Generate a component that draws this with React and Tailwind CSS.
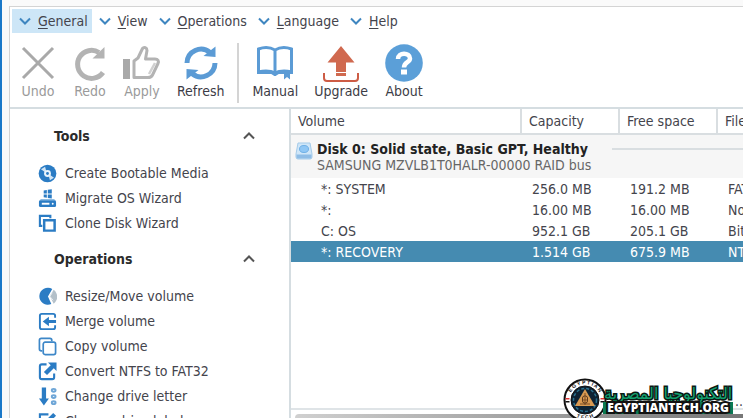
import React, { useState } from "react";

const menuItems = ["General", "View", "Operations", "Language", "Help"];

const tools = ["Create Bootable Media", "Migrate OS Wizard", "Clone Disk Wizard"];

const operations = [
  "Resize/Move volume",
  "Merge volume",
  "Copy volume",
  "Convert NTFS to FAT32",
  "Change drive letter",
  "Change drive label",
];

const volumes = [
  { name: "*: SYSTEM", capacity: "256.0 MB", free: "191.2 MB", fs: "FAT32" },
  { name: "*:", capacity: "16.00 MB", free: "16.00 MB", fs: "Not formatted" },
  { name: "C: OS", capacity: "952.1 GB", free: "205.1 GB", fs: "BitLocker" },
  { name: "*: RECOVERY", capacity: "1.514 GB", free: "675.9 MB", fs: "NTFS" },
];

// Large toolbar icons
const toolbarIcons = {
  Undo: (
    <path d="M5 5L35 35M35 5L5 35" stroke="#a9a9a9" strokeWidth="3" fill="none" />
  ),
  Redo: (
    <>
      <path d="M33 29.500A14 14 0 1 1 29 9.500" stroke="#b3b3b3" strokeWidth="5" fill="none" />
      <path d="M34.500 4V15.500H22.500Z" fill="#b3b3b3" />
    </>
  ),
  Apply: (
    <>
      <path d="M1 16H8V36H1Z" fill="#a9a9a9" />
      <path
        d="M12 18L16 15L20.500 5.500C22 3.500 25 4.500 25 7.500L23.500 16H33C36 16 37 18 36 20.500L30.500 32C29.500 34 28 34.500 26 34.500H12Z"
        stroke="#b3b3b3"
        strokeWidth="3"
        strokeLinejoin="round"
        fill="none"
      />
      <path d="M33 20L27 31" stroke="#d0d0d0" strokeWidth="2.500" />
    </>
  ),
  Refresh: (
    <>
      <path d="M6 20A14 14 0 0 1 29 9.500M34 20A14 14 0 0 1 11 30.500" stroke="#5b9bd5" strokeWidth="5" fill="none" />
      <path d="M34.500 3.500V14L22.500 13Z" fill="#5b9bd5" />
      <path d="M5.500 36.500V26L17.500 27Z" fill="#5b9bd5" />
    </>
  ),
  Manual: (
    <>
      <path
        d="M3.500 6C9 4 15 4 20 7C25 4 31 4 36.500 6V29C31 27.500 25 27.500 20 30C15 27.500 9 27.500 3.500 29ZM20 6V29"
        stroke="#5b9bd5"
        strokeWidth="3"
        fill="none"
      />
      <path d="M2 27.500H17L20 29L23 27.500H38V31H25C22 31 22 33 20 33C18 33 18 31 15 31H2Z" fill="#5b9bd5" />
      <path d="M29 28H35V36.500L32 34L29 36.500Z" fill="#5b9bd5" />
    </>
  ),
  Upgrade: (
    <>
      <path d="M20 3L33.500 19.500H25V29H15V19.500H6.500Z" fill="#d0694f" />
      <path d="M15 31.500H25" stroke="#d0694f" strokeWidth="3" />
      <path d="M3 30V35Q3 38 6 38H34Q37 38 37 35V30" stroke="#cd5c45" strokeWidth="2" fill="none" />
    </>
  ),
  About: (
    <>
      <circle cx="20" cy="20" r="18.800" fill="#5b9fd8" />
      <path
        d="M14 16C14 9 26 9 26 15.500C26 19.500 20 19 20 24.500"
        stroke="#fff"
        strokeWidth="4.500"
        fill="none"
      />
      <path d="M17 26.500H23V31.500H17Z" fill="#fff" />
    </>
  ),
};

// Small sidebar icons
const smallIcons = {
  "Create Bootable Media": (
    <>
      <circle cx="10" cy="10" r="9.300" fill="#2b7cc4" />
      <path d="M8 8L4.500 5.500L7 4ZM12 12L15.500 14.500L13 16Z" fill="#cfe4f5" stroke="#cfe4f5" strokeWidth="1.500" />
      <circle cx="10" cy="10" r="3.600" fill="#e9f4fc" />
      <circle cx="10" cy="10" r="1.500" fill="#2b7cc4" />
    </>
  ),
  "Migrate OS Wizard": (
    <>
      <path d="M6 1.500L9.300 1V4.700H6ZM10.300 .8L14.500 .2V4.700H10.300ZM6 5.700H9.300V9.300L6 8.800ZM10.300 5.700H14.500V10L10.300 9.500Z" fill="#2b7cc4" />
      <path d="M3 10.500H17L19 13H1Z" fill="#8dbbe2" />
      <rect x="1" y="12" width="18" height="7" rx="1.500" fill="#2b7cc4" />
      <path d="M4 15.500H12" stroke="#fff" strokeWidth="2" />
      <circle cx="15.500" cy="15.500" r="1" fill="#fff" />
    </>
  ),
  "Clone Disk Wizard": (
    <g stroke="#2b7cc4" fill="none">
      <path d="M4.500 12.500H2V2H13V4.500" strokeWidth="2.200" />
      <path d="M6.500 6.500H17.500V17.500H6.500Z" strokeWidth="2.600" />
    </g>
  ),
  "Resize/Move volume": (
    <>
      <path d="M10.500 10L15 2A9 9 0 1 0 14 18Z" fill="#2b7cc4" />
      <path d="M12.500 9.500L16.500 3A9 9 0 0 1 16.500 17.500Z" fill="#b4c0c9" />
      <path d="M15 6L12.500 10L16 14" stroke="#e9eef1" strokeWidth="1" fill="none" />
    </>
  ),
  "Merge volume": (
    <>
      <path d="M18 6V4Q18 2 16 2H4Q2 2 2 4V16Q2 18 4 18H16Q18 18 18 16V14" stroke="#2b7cc4" strokeWidth="2" fill="none" />
      <path d="M19 8.500V11.500H11.500V15L5 10L11.500 5V8.500Z" fill="#2b7cc4" />
    </>
  ),
  "Copy volume": (
    <g stroke="#3d87c8" strokeWidth="1.800" fill="none">
      <path d="M4.500 14.500H3.500Q1.500 14.500 1.500 12.500V3.500Q1.500 1.500 3.500 1.500H12.500Q14.500 1.500 14.500 3.500V4.500" />
      <rect x="5.500" y="5.500" width="13" height="13" rx="2" />
    </g>
  ),
  "Convert NTFS to FAT32": (
    <>
      <path d="M9 2.500H4Q2 2.500 2 4.500V16Q2 18 4 18H15Q17 18 17 16V12" stroke="#2b7cc4" strokeWidth="2.200" fill="none" />
      <path d="M19.500 .5V9.500L16.600 6.600L9.500 13.800L6.200 10.500L13.400 3.400L10.500 .5Z" fill="#2b7cc4" />
    </>
  ),
  "Change drive letter": (
    <>
      <path d="M4 .5H8.500V12H11.500L6.200 19.500L1 12H4Z" fill="#2b7cc4" />
      <g stroke="#6ea6d7" strokeWidth="2" fill="none">
        <ellipse cx="16.500" cy="3.500" rx="2" ry="1.500" />
        <ellipse cx="16.500" cy="10" rx="2" ry="1.500" />
        <ellipse cx="16.500" cy="16.500" rx="2" ry="1.500" />
      </g>
    </>
  ),
  "Change drive label": (
    <>
      <path d="M11 2.500H2V18H17V11" stroke="#2b7cc4" strokeWidth="2.200" fill="none" />
      <path d="M16 1L19 4L11 12L7 13L8 9Z" fill="#2b7cc4" />
    </>
  ),
};

const Chevron = ({ className }) => (
  <svg viewBox="0 0 12 8" className={className} fill="none" stroke="currentColor" strokeWidth="2">
    <path d="M1 1.500L6 6.500L11 1.500" />
  </svg>
);

const ToolButton = ({ label, disabled }) => (
  <button type="button" disabled={disabled} className="flex flex-col items-center">
    <svg viewBox="0 0 40 40" className="size-10">
      {toolbarIcons[label]}
    </svg>
    <span className={`h-5 leading-4 ${disabled ? "text-[#9a9a9a]" : "text-[#3c3c46]"}`}>{label}</span>
  </button>
);

const SideSection = ({ title, items }) => {
  const [open, setOpen] = useState(true);

  return (
    <section>
      <h2>
        <button
          type="button"
          aria-expanded={open}
          onClick={() => setOpen(!open)}
          className="flex h-6 w-full items-center justify-between pl-4 font-bold text-[#2b2b2b]"
        >
          {title}
          <Chevron className={open ? "w-3 rotate-180 text-[#555]" : "w-3 text-[#555]"} />
        </button>
      </h2>
      {open && (
        <ul className="pt-[13px]">
          {items.map((item) => (
            <li key={item}>
              <button type="button" className="flex h-[25px] w-full items-center gap-2 whitespace-nowrap">
                <svg viewBox="0 0 20 20" className="size-[19px] shrink-0">
                  {smallIcons[item]}
                </svg>
                {item}
              </button>
            </li>
          ))}
        </ul>
      )}
    </section>
  );
};

const VolumeTable = ({ selected, onSelect }) => (
  <table className="w-[540px] table-fixed border-collapse text-left whitespace-nowrap">
    <colgroup>
      <col className="w-[230px]" />
      <col className="w-[98px]" />
      <col className="w-[98px]" />
      <col />
    </colgroup>
    <thead>
      <tr className="h-[25px] border-b-2 border-[#d9dee1]">
        <th className="pl-[7px] font-normal">Volume</th>
        <th className="border-l-2 border-[#d9dee1] pl-[7px] font-normal">Capacity</th>
        <th className="border-l-2 border-[#d9dee1] pl-[7px] font-normal">Free space</th>
        <th className="border-l-2 border-[#d9dee1] pl-[7px] font-normal">File system</th>
      </tr>
    </thead>
    <tbody>
      <tr className="bg-[#f6f6f6]">
        <td colSpan={4} className="h-[44px] p-0">
          <div className="flex gap-1 pl-1">
            <svg viewBox="0 0 18 18" className="mt-px size-[18px] shrink-0">
              <path d="M3 1H15L17 12V15Q17 17 15 17H3Q1 17 1 15V12Z" fill="#cfe6f8" stroke="#a5cbe9" />
              <ellipse cx="9" cy="7" rx="4.500" ry="3.500" fill="#8fc7f5" stroke="#6fb0e6" />
              <path d="M1.500 12.500H16.500V15Q16.500 16.500 15 16.500H3Q1.500 16.500 1.500 15Z" fill="#8fbde6" />
            </svg>
            <div className="flex-1">
              <div className="flex items-center gap-6 leading-4">
                <span className="font-bold text-[#222]">Disk 0: Solid state, Basic GPT, Healthy</span>
                <span className="h-[2px] flex-1 bg-[#d9dee1]" />
              </div>
              <div className="leading-4 text-[#666]">SAMSUNG MZVLB1T0HALR-00000 RAID bus</div>
            </div>
          </div>
        </td>
      </tr>
      {volumes.map((volume) => (
        <tr
          key={volume.name}
          onClick={() => onSelect(volume.name)}
          className={`h-[21px] ${selected === volume.name ? "bg-[#458bb1] text-white" : ""}`}
        >
          <td className="p-0 pl-[30px] leading-5">{volume.name}</td>
          <td className="p-0 pl-[11px] leading-5">{volume.capacity}</td>
          <td className="p-0 pl-[11px] leading-5">{volume.free}</td>
          <td className="p-0 pl-[11px] leading-5">{volume.fs}</td>
        </tr>
      ))}
    </tbody>
  </table>
);

const Watermark = () => (
  <div className="absolute right-[10px] -bottom-1 flex items-center">
    <svg viewBox="0 0 44 44" className="size-11">
      <circle cx="22" cy="22" r="20.500" fill="#fff" stroke="#111" strokeWidth="2" />
      <circle cx="22" cy="22" r="14" fill="#0d2233" stroke="#111" />
      <circle cx="22" cy="22" r="11.500" fill="none" stroke="#2b7390" strokeWidth="1.500" strokeDasharray="3 2" />
      <path d="M22 11L32 28H12Z" fill="#d99a52" />
      <path d="M22 15V27M19 22H25M17 26H27" stroke="#7b4d24" strokeWidth="1" />
      <rect x="19.500" y="18" width="5" height="7" rx="2" fill="none" stroke="#5f3b1d" />
      <path d="M2.500 20H6.500V21.500H2.500ZM37.500 20H41.500V21.500H37.500Z" fill="#d33" />
      <path d="M2.500 23H6.500V24.500H2.500ZM37.500 23H41.500V24.500H37.500Z" fill="#111" />
      <defs>
        <path id="ringTop" d="M6 22A16 16 0 0 1 38 22" />
        <path id="ringBottom" d="M3 22A19 19 0 0 0 41 22" />
      </defs>
      <g fill="#111" fontSize="5" fontWeight="bold" textAnchor="middle" fontFamily="Liberation Sans, sans-serif">
        <text>
          <textPath href="#ringTop" startOffset="50%">E G Y P T I A N</textPath>
        </text>
        <text>
          <textPath href="#ringBottom" startOffset="50%">T E C H</textPath>
        </text>
      </g>
    </svg>
    <div className="-ml-1 flex flex-col items-center whitespace-nowrap [paint-order:stroke_fill]">
      <span
        dir="rtl"
        className="font-['DejaVu_Sans',sans-serif] text-[16px] leading-4 text-[#12a06e] [-webkit-text-stroke:3px_#0a1a14]"
      >
        التكنولوجيا المصرية
      </span>
      <span className="bg-[#0a7a54] px-1 font-['Open_Sans',sans-serif] text-[12px] leading-3 font-extrabold text-white [-webkit-text-stroke:4px_#111]">
        EGYPTIANTECH.ORG
      </span>
    </div>
  </div>
);

export default function App() {
  const [activeMenu, setActiveMenu] = useState("General");
  const [selected, setSelected] = useState("*: RECOVERY");

  return (
    <div className="relative flex h-screen flex-col overflow-hidden border-l-2 border-[#1a78c8] bg-[#fafafa] pt-[6px] pl-[7px] font-['DejaVu_Sans_Condensed','DejaVu_Sans',sans-serif] text-[14px] text-[#44444c]">
      <div className="flex min-h-0 flex-1 flex-col border-t border-l border-[#d4d4d4] bg-white">
        <nav className="flex shrink-0 pt-[2px] pl-[2px]">
          {menuItems.map((item) => (
            <button
              key={item}
              type="button"
              onClick={() => setActiveMenu(item)}
              className={`flex h-6 items-center gap-[7px] pr-1 pl-[7px] ${activeMenu === item ? "bg-[#cde6f7]" : ""}`}
            >
              <Chevron className="w-3 text-[#3f86c0]" />
              <span>
                <span className="underline underline-offset-2">{item[0]}</span>
                {item.slice(1)}
              </span>
            </button>
          ))}
        </nav>

        <div className="flex shrink-0 gap-[13px] border-b-2 border-[#d5dde1] pt-[10px] pb-1 pl-2">
          <div className="flex gap-3">
            <ToolButton label="Undo" disabled />
            <ToolButton label="Redo" disabled />
            <ToolButton label="Apply" disabled />
            <div className="pl-[3px]">
              <ToolButton label="Refresh" />
            </div>
          </div>
          <div className="w-[2px] bg-[#d4d4d4]" />
          <div className="flex gap-4">
            <ToolButton label="Manual" />
            <ToolButton label="Upgrade" />
            <ToolButton label="About" />
          </div>
        </div>

        <div className="flex min-h-0 flex-1">
          <aside className="flex w-[281px] shrink-0 flex-col gap-[11px] overflow-hidden border-r-2 border-[#d5dde1] pt-[15px] pr-[34px] pl-7">
            <SideSection title="Tools" items={tools} />
            <SideSection title="Operations" items={operations} />
          </aside>
          <main className="flex min-w-0 flex-1 flex-col overflow-hidden">
            <div className="flex-1 overflow-hidden">
              <VolumeTable selected={selected} onSelect={setSelected} />
            </div>
            <div className="pb-px text-right leading-3">..</div>
            <div className="h-[10px] shrink-0 border-t-2 border-[#dfe4e7] pt-1 pl-1">
              <div className="h-1 rounded-tl bg-linear-to-r from-[#d0d0d0] to-[#777]" />
            </div>
          </main>
        </div>
      </div>
      <Watermark />
    </div>
  );
}
